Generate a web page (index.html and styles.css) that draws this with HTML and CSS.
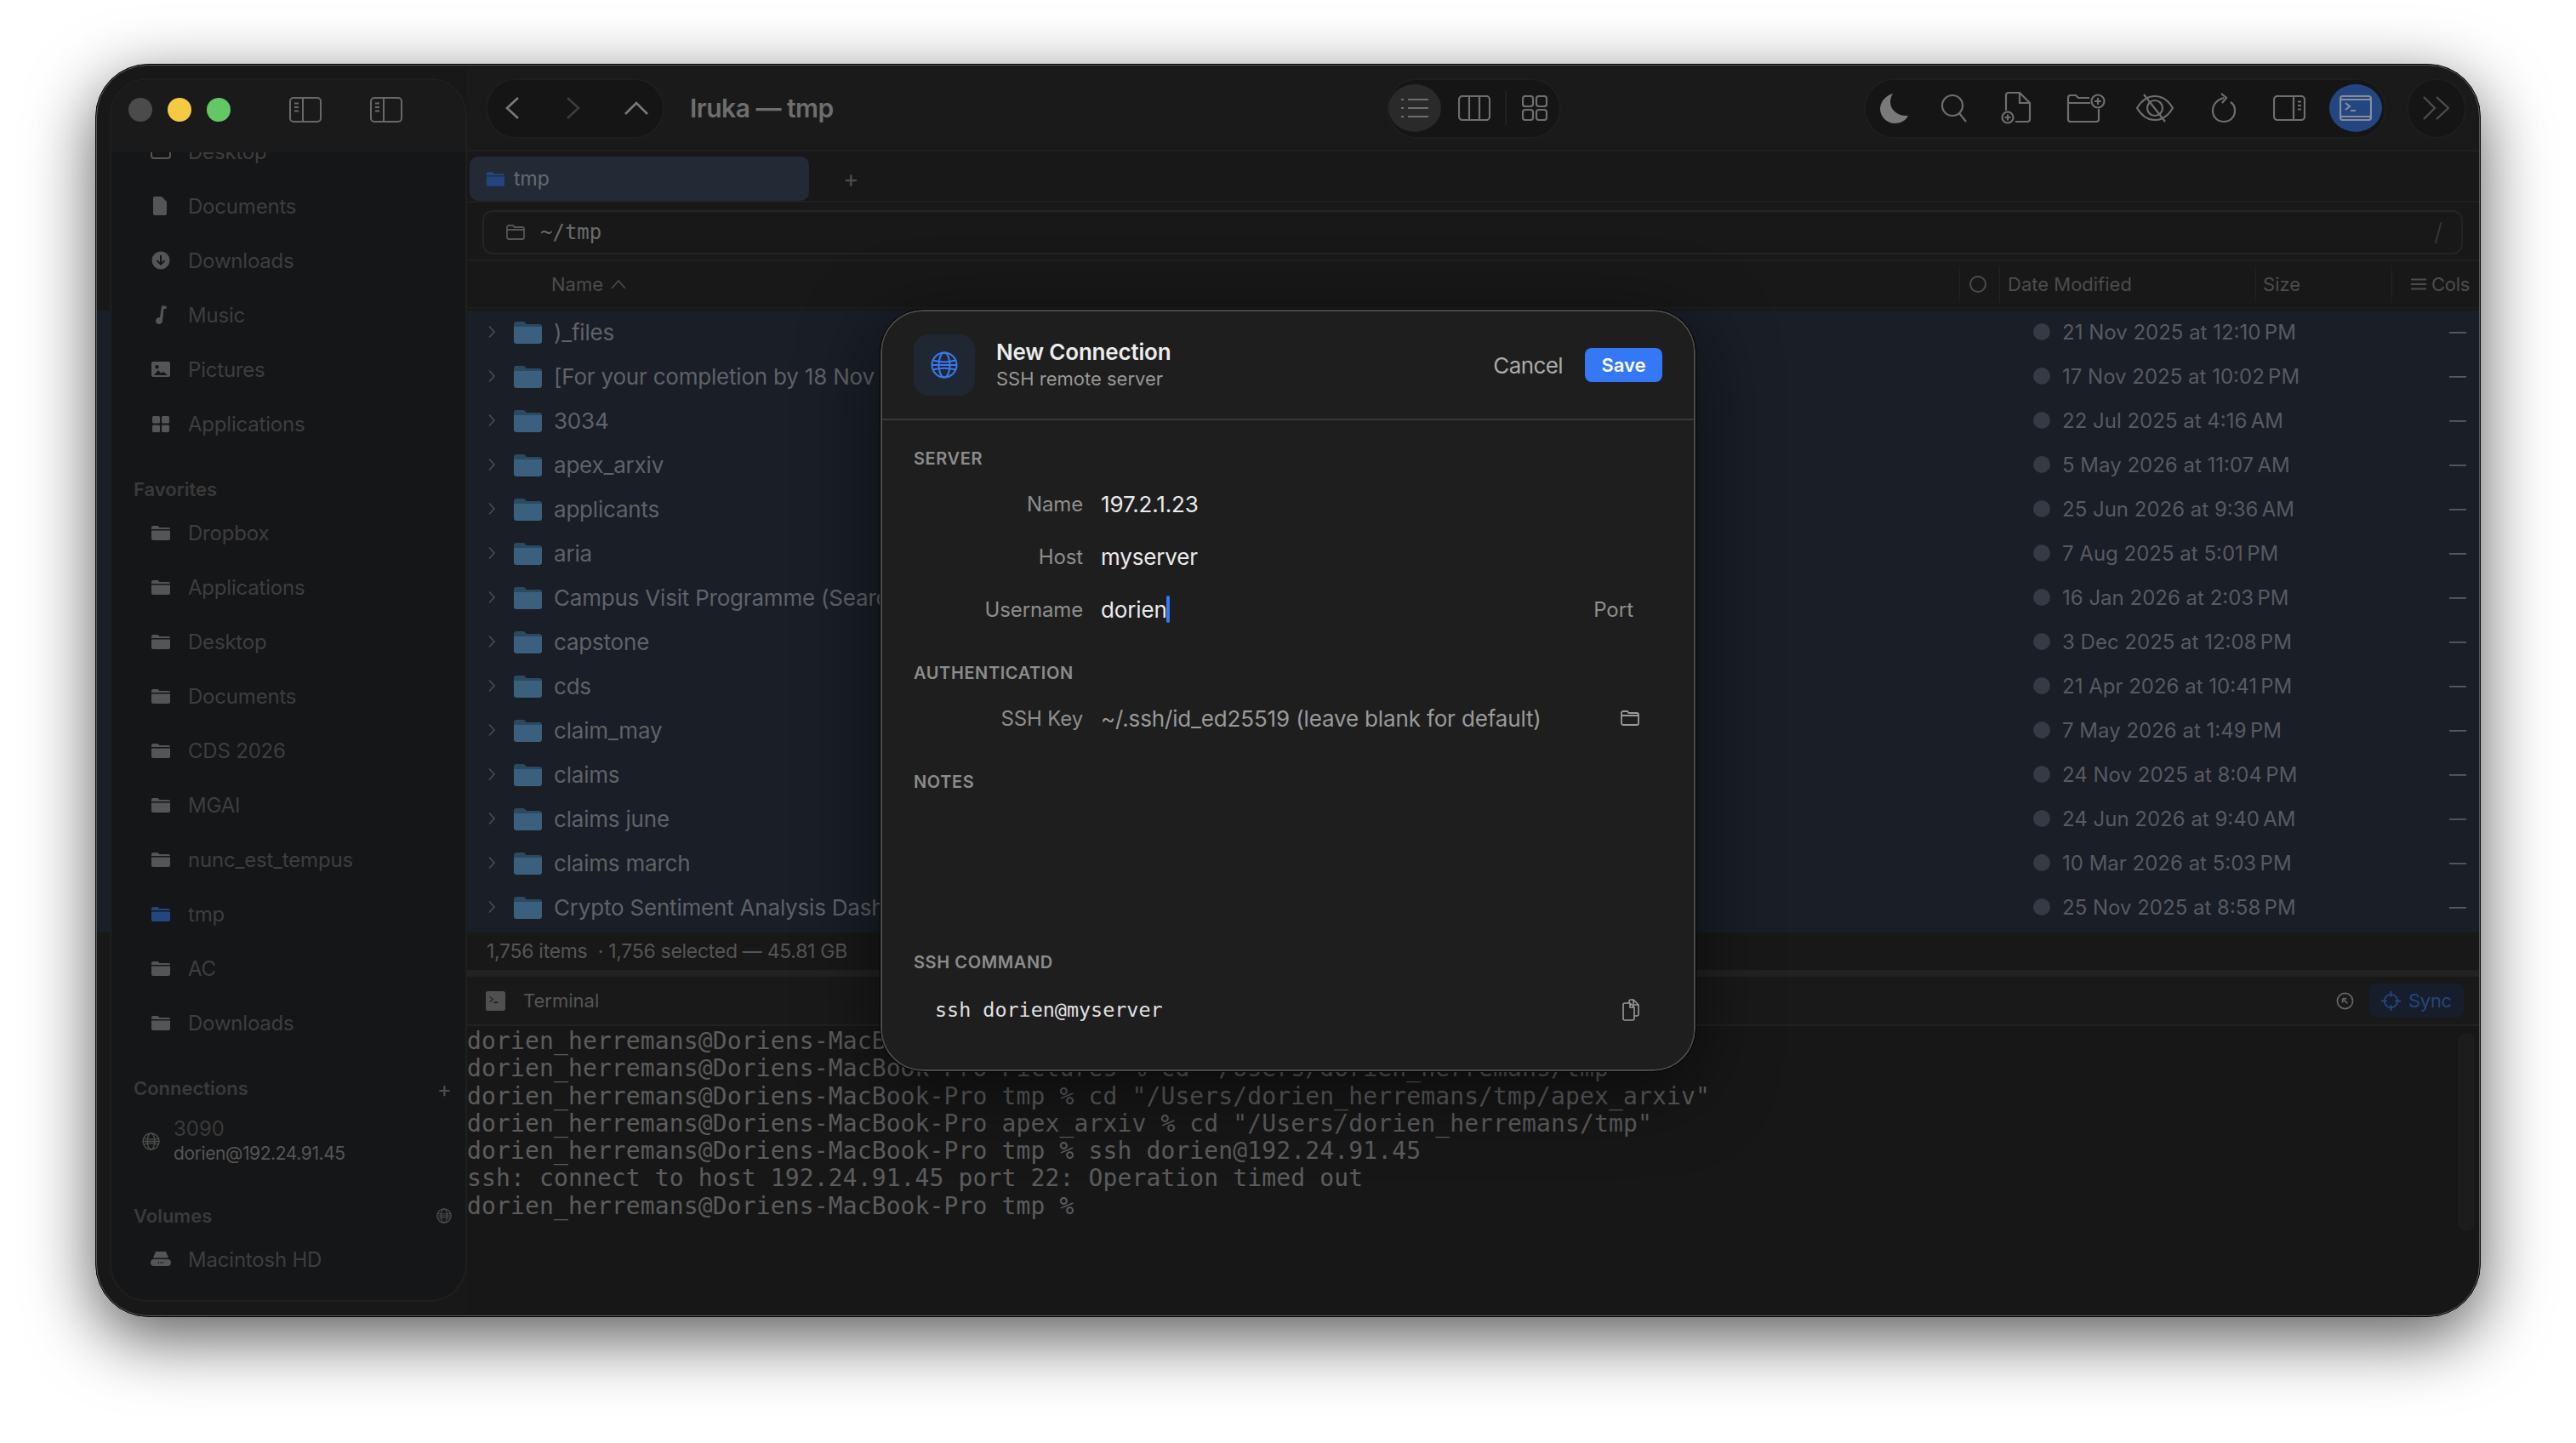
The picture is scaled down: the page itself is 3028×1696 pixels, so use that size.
FILE: index.html
```html
<!DOCTYPE html>
<html lang="en">
<head>
  <meta charset="UTF-8"/>
  <title>Iruka — tmp</title>
  <link rel="stylesheet" href="styles.css">
</head>
<body>

  <!-- shared icons -->
  <svg class="icon-defs" aria-hidden="true">
    <symbol id="i-folder-fill" viewBox="0 0 24 18">
      <path d="M1 3a2 2 0 0 1 2-2h5.5l2 2H21a2 2 0 0 1 2 2H1z"/>
      <path d="M1 6.5h22V16a2 2 0 0 1-2 2H3a2 2 0 0 1-2-2z"/>
    </symbol>
    <symbol id="i-folder-row" viewBox="0 0 33 27">
      <path fill="#2b4a60" d="M0 4a3 3 0 0 1 3-3h9l3 3h15a3 3 0 0 1 3 3v4H0z"/>
      <path fill="#3a607d" d="M0 7h33v17a3 3 0 0 1-3 3H3a3 3 0 0 1-3-3z"/>
    </symbol>
    <symbol id="i-folder-line" viewBox="0 0 22 18">
      <path fill="none" stroke="currentColor" stroke-width="1.8" d="M1 3a2 2 0 0 1 2-2h5l1.5 2H19a2 2 0 0 1 2 2v10a2 2 0 0 1-2 2H3a2 2 0 0 1-2-2zM1 6h20"/>
    </symbol>
    <symbol id="i-chevron" viewBox="0 0 10 16">
      <path fill="none" stroke="currentColor" stroke-width="1.5" d="M2 1.5 8 8l-6 6.5"/>
    </symbol>
    <symbol id="i-globe" viewBox="0 0 32 32">
      <g fill="none" stroke="currentColor" stroke-width="2">
        <circle cx="16" cy="16" r="14.5"/>
        <ellipse cx="16" cy="16" rx="6.5" ry="14.5"/>
        <path d="M3 10.500c7 2.500 19 2.500 26 0M3 21.500c7-2.500 19-2.500 26 0M1.500 16h29"/>
      </g>
    </symbol>
    <symbol id="i-pane" viewBox="0 0 38 30">
      <rect x="1" y="1" width="36" height="28" rx="4" fill="none" stroke="currentColor" stroke-width="2"/>
      <path d="M16 1v28" stroke="currentColor" stroke-width="2"/>
      <path d="M6 7.500h5M6 12h5M6 16.500h5" stroke="currentColor" stroke-width="2"/>
    </symbol>
  </svg>

  <div class="window">
    <div class="selection-band"></div>

    <!-- SIDEBAR -->
    <aside class="sidebar">
      <div class="sidebar-top">
        <span class="light light-grey"></span>
        <span class="light light-yellow"></span>
        <span class="light light-green"></span>
        <svg class="pane-icon pane-first"><use href="#i-pane"/></svg>
        <svg class="pane-icon pane-second"><use href="#i-pane"/></svg>
      </div>
      <div class="sidebar-scroll">
        <div class="side-item">
          <svg class="side-icon" viewBox="0 0 24 18"><rect x="1" y="1" width="22" height="16" rx="3" fill="none" stroke="currentColor" stroke-width="2"/></svg>
          Desktop
        </div>
        <div class="side-item">
          <svg class="side-icon" viewBox="0 0 24 24"><path d="M5 1h8l6 6v14a2 2 0 0 1-2 2H5a2 2 0 0 1-2-2V3a2 2 0 0 1 2-2z"/></svg>
          Documents
        </div>
        <div class="side-item">
          <svg class="side-icon" viewBox="0 0 24 24"><path fill-rule="evenodd" d="M12 1.500a10.500 10.500 0 1 1 0 21 10.500 10.500 0 0 1 0-21zM11 6v8.500l-3-3-1.300 1.300 5.300 5.300 5.300-5.300-1.300-1.300-3 3V6z"/></svg>
          Downloads
        </div>
        <div class="side-item">
          <svg class="side-icon" viewBox="0 0 24 24"><path d="M13 1.500h5.500v3.500H15.500L14 19a4 4 0 1 1-3-3.800z"/></svg>
          Music
        </div>
        <div class="side-item">
          <svg class="side-icon" viewBox="0 0 24 20"><path fill-rule="evenodd" d="M3 1h18a2 2 0 0 1 2 2v14a2 2 0 0 1-2 2H3a2 2 0 0 1-2-2V3a2 2 0 0 1 2-2zm12 12 5 4H4l5-6 3 3.500zM7.500 5a2.200 2.200 0 1 0 0 4.400 2.200 2.200 0 0 0 0-4.400z"/></svg>
          Pictures
        </div>
        <div class="side-item">
          <svg class="side-icon" viewBox="0 0 24 24"><rect x="2" y="3" width="9" height="8.500" rx="1.500"/><rect x="13" y="3" width="9" height="8.500" rx="1.500"/><rect x="2" y="13.500" width="9" height="8.500" rx="1.500"/><rect x="13" y="13.500" width="9" height="8.500" rx="1.500"/></svg>
          Applications
        </div>

        <div class="side-heading">Favorites</div>
        <div class="side-item"><svg class="side-icon"><use href="#i-folder-fill"/></svg>Dropbox</div>
        <div class="side-item"><svg class="side-icon"><use href="#i-folder-fill"/></svg>Applications</div>
        <div class="side-item"><svg class="side-icon"><use href="#i-folder-fill"/></svg>Desktop</div>
        <div class="side-item"><svg class="side-icon"><use href="#i-folder-fill"/></svg>Documents</div>
        <div class="side-item"><svg class="side-icon"><use href="#i-folder-fill"/></svg>CDS 2026</div>
        <div class="side-item"><svg class="side-icon"><use href="#i-folder-fill"/></svg>MGAI</div>
        <div class="side-item"><svg class="side-icon"><use href="#i-folder-fill"/></svg>nunc_est_tempus</div>
        <div class="side-item side-item-current"><svg class="side-icon"><use href="#i-folder-fill"/></svg>tmp</div>
        <div class="side-item"><svg class="side-icon"><use href="#i-folder-fill"/></svg>AC</div>
        <div class="side-item"><svg class="side-icon"><use href="#i-folder-fill"/></svg>Downloads</div>

        <div class="side-heading">
          Connections
          <span class="side-plus">+</span>
        </div>
        <div class="side-connection">
          <svg class="connection-globe"><use href="#i-globe"/></svg>
          <div>
            <div class="connection-name">3090</div>
            <div class="connection-host">dorien@192.24.91.45</div>
          </div>
        </div>

        <div class="side-heading">
          Volumes
          <svg class="volumes-globe"><use href="#i-globe"/></svg>
        </div>
        <div class="side-item">
          <svg class="side-icon" viewBox="0 0 24 18"><path d="M6 0h12l3 7.500H3z"/><path fill-rule="evenodd" d="M4 9h16a3.500 3.500 0 0 1 0 8H4a3.500 3.500 0 0 1 0-8zm5 3v2h1v-2zm2.500 0v2h1v-2zm2.500 0v2h1v-2z"/></svg>
          Macintosh HD
        </div>
      </div>
    </aside>

    <!-- MAIN -->
    <main class="main">
      <header class="toolbar">
        <div class="pill nav-pill">
          <svg class="nav-icon" viewBox="0 0 18 28"><path d="M16 2 3 14l13 12"/></svg>
          <svg class="nav-icon nav-icon-off" viewBox="0 0 18 28"><path d="M2 2l13 12L2 26"/></svg>
          <svg class="nav-up" viewBox="0 0 30 18"><path d="M2 16 15 3l13 13"/></svg>
        </div>
        <div class="window-title">Iruka — tmp</div>

        <div class="pill view-pill">
          <span class="view-btn view-btn-on">
            <svg class="tool-icon" width="34" height="26" viewBox="0 0 34 26"><path d="M9 3h24M9 13h24M9 23h24M1 3h3M1 13h3M1 23h3"/></svg>
          </span>
          <span class="view-btn">
            <svg class="tool-icon" width="38" height="30" viewBox="0 0 38 30"><rect x="1" y="1" width="36" height="28" rx="4"/><path d="M13 1v28M25 1v28"/></svg>
          </span>
          <span class="view-sep"></span>
          <span class="view-btn view-btn-last">
            <svg class="tool-icon" width="30" height="30" viewBox="0 0 30 30"><rect x="1" y="1" width="12" height="12" rx="3"/><rect x="17" y="1" width="12" height="12" rx="3"/><rect x="1" y="17" width="12" height="12" rx="3"/><rect x="17" y="17" width="12" height="12" rx="3"/></svg>
          </span>
        </div>

        <div class="pill tool-pill">
          <span class="tool-slot">
            <svg width="34" height="35" viewBox="0 0 34 35"><path class="moon" d="M15 0C5 3 0 11 0 18c0 9 8 17 17 17 7 0 13-3 16-9-11 1-21-6-21-16 0-4 1-7 3-10z"/></svg>
          </span>
          <span class="tool-slot">
            <svg class="tool-icon" width="32" height="34" viewBox="0 0 32 34"><circle cx="14" cy="14" r="12"/><path d="M22 23l8 10"/></svg>
          </span>
          <span class="tool-slot">
            <svg class="tool-icon" width="36" height="38" viewBox="0 0 36 38"><path d="M6 22V4a3 3 0 0 1 3-3h13l12 12v19a3 3 0 0 1-3 3H17M22 1v12h12"/><circle cx="8" cy="30" r="6.5"/><path d="M8 26.500v7M4.500 30h7"/></svg>
          </span>
          <span class="tool-slot">
            <svg class="tool-icon" width="46" height="34" viewBox="0 0 46 34"><path d="M27 5H14l-3-3H5a3 3 0 0 0-3 3v25a3 3 0 0 0 3 3h30a3 3 0 0 0 3-3V18M2 11h26"/><circle cx="37" cy="9" r="7.5"/><path d="M37 5v8M33 9h8"/></svg>
          </span>
          <span class="tool-slot">
            <svg class="tool-icon" width="46" height="36" viewBox="0 0 46 36"><path d="M2 18C8 8 15 4 23 4s15 4 21 14c-6 10-13 14-21 14S8 28 2 18z"/><circle cx="23" cy="18" r="9"/><path d="M10 2l25 32"/></svg>
          </span>
          <span class="tool-slot">
            <svg class="tool-icon" width="32" height="36" viewBox="0 0 32 36"><path d="M16 6C8 8 3 14 3 21c0 8 6 13 13 13s13-5 13-13c0-4-2-8-5-10M13 1l6 5-5 6"/></svg>
          </span>
          <span class="tool-slot">
            <svg class="tool-icon" width="38" height="30" viewBox="0 0 38 30"><rect x="1" y="1" width="36" height="28" rx="4"/><path d="M24 1v28M29 7.500h4M29 12h4M29 16.500h4"/></svg>
          </span>
          <span class="tool-term">
            <svg class="tool-icon" width="38" height="30" viewBox="0 0 38 30"><rect x="1" y="1" width="36" height="28" rx="3"/><path d="M1 5h36M1 25h36M7 9l5 4-5 4M13 18h6"/></svg>
          </span>
        </div>

        <div class="pill more-pill">
          <svg class="tool-icon" width="34" height="30" viewBox="0 0 34 30"><path d="M2 2l13 13L2 28M17 2l14 13-14 13"/></svg>
        </div>
      </header>

      <div class="tabbar">
        <div class="tab">
          <svg class="tab-folder"><use href="#i-folder-fill"/></svg>
          tmp
        </div>
        <span class="tab-add">+</span>
      </div>

      <div class="pathbar">
        <div class="path-box">
          <svg class="path-folder"><use href="#i-folder-line"/></svg>
          <span class="path-text">~/tmp</span>
          <span class="path-end">/</span>
        </div>
      </div>

      <div class="list-head">
        <span class="head-name">Name</span>
        <svg class="head-sort" viewBox="0 0 18 12"><path d="M1 11 9 2l8 9"/></svg>
        <span class="head-sep head-sep-a"></span>
        <span class="head-circle"></span>
        <span class="head-sep head-sep-b"></span>
        <span class="head-date">Date Modified</span>
        <span class="head-sep head-sep-c"></span>
        <span class="head-size">Size</span>
        <span class="head-sep head-sep-d"></span>
        <svg class="head-sliders" viewBox="0 0 18 16"><path d="M0 2.500h18M0 8h18M0 13.500h18"/></svg>
        <span class="head-cols">Cols</span>
      </div>

      <div class="file-list">
        <div class="row"><svg class="row-chevron"><use href="#i-chevron"/></svg><svg class="row-folder"><use href="#i-folder-row"/></svg><span class="row-name">)_files</span><span class="row-dot"></span><span class="row-date">21 Nov 2025 at 12:10&#8239;PM</span><span class="row-size">—</span></div>
        <div class="row"><svg class="row-chevron"><use href="#i-chevron"/></svg><svg class="row-folder"><use href="#i-folder-row"/></svg><span class="row-name">[For your completion by 18 Nov 2025]</span><span class="row-dot"></span><span class="row-date">17 Nov 2025 at 10:02&#8239;PM</span><span class="row-size">—</span></div>
        <div class="row"><svg class="row-chevron"><use href="#i-chevron"/></svg><svg class="row-folder"><use href="#i-folder-row"/></svg><span class="row-name">3034</span><span class="row-dot"></span><span class="row-date">22 Jul 2025 at 4:16&#8239;AM</span><span class="row-size">—</span></div>
        <div class="row"><svg class="row-chevron"><use href="#i-chevron"/></svg><svg class="row-folder"><use href="#i-folder-row"/></svg><span class="row-name">apex_arxiv</span><span class="row-dot"></span><span class="row-date">5 May 2026 at 11:07&#8239;AM</span><span class="row-size">—</span></div>
        <div class="row"><svg class="row-chevron"><use href="#i-chevron"/></svg><svg class="row-folder"><use href="#i-folder-row"/></svg><span class="row-name">applicants</span><span class="row-dot"></span><span class="row-date">25 Jun 2026 at 9:36&#8239;AM</span><span class="row-size">—</span></div>
        <div class="row"><svg class="row-chevron"><use href="#i-chevron"/></svg><svg class="row-folder"><use href="#i-folder-row"/></svg><span class="row-name">aria</span><span class="row-dot"></span><span class="row-date">7 Aug 2025 at 5:01&#8239;PM</span><span class="row-size">—</span></div>
        <div class="row"><svg class="row-chevron"><use href="#i-chevron"/></svg><svg class="row-folder"><use href="#i-folder-row"/></svg><span class="row-name">Campus Visit Programme (Search)</span><span class="row-dot"></span><span class="row-date">16 Jan 2026 at 2:03&#8239;PM</span><span class="row-size">—</span></div>
        <div class="row"><svg class="row-chevron"><use href="#i-chevron"/></svg><svg class="row-folder"><use href="#i-folder-row"/></svg><span class="row-name">capstone</span><span class="row-dot"></span><span class="row-date">3 Dec 2025 at 12:08&#8239;PM</span><span class="row-size">—</span></div>
        <div class="row"><svg class="row-chevron"><use href="#i-chevron"/></svg><svg class="row-folder"><use href="#i-folder-row"/></svg><span class="row-name">cds</span><span class="row-dot"></span><span class="row-date">21 Apr 2026 at 10:41&#8239;PM</span><span class="row-size">—</span></div>
        <div class="row"><svg class="row-chevron"><use href="#i-chevron"/></svg><svg class="row-folder"><use href="#i-folder-row"/></svg><span class="row-name">claim_may</span><span class="row-dot"></span><span class="row-date">7 May 2026 at 1:49&#8239;PM</span><span class="row-size">—</span></div>
        <div class="row"><svg class="row-chevron"><use href="#i-chevron"/></svg><svg class="row-folder"><use href="#i-folder-row"/></svg><span class="row-name">claims</span><span class="row-dot"></span><span class="row-date">24 Nov 2025 at 8:04&#8239;PM</span><span class="row-size">—</span></div>
        <div class="row"><svg class="row-chevron"><use href="#i-chevron"/></svg><svg class="row-folder"><use href="#i-folder-row"/></svg><span class="row-name">claims june</span><span class="row-dot"></span><span class="row-date">24 Jun 2026 at 9:40&#8239;AM</span><span class="row-size">—</span></div>
        <div class="row"><svg class="row-chevron"><use href="#i-chevron"/></svg><svg class="row-folder"><use href="#i-folder-row"/></svg><span class="row-name">claims march</span><span class="row-dot"></span><span class="row-date">10 Mar 2026 at 5:03&#8239;PM</span><span class="row-size">—</span></div>
        <div class="row"><svg class="row-chevron"><use href="#i-chevron"/></svg><svg class="row-folder"><use href="#i-folder-row"/></svg><span class="row-name">Crypto Sentiment Analysis Dashboard</span><span class="row-dot"></span><span class="row-date">25 Nov 2025 at 8:58&#8239;PM</span><span class="row-size">—</span></div>
      </div>

      <div class="statusbar">1,756 items &nbsp;· 1,756 selected — 45.81 GB</div>
      <div class="split-handle"></div>

      <div class="term-head">
        <svg class="term-badge" viewBox="0 0 24 24"><path fill-rule="evenodd" d="M3 0h18a3 3 0 0 1 3 3v18a3 3 0 0 1-3 3H3a3 3 0 0 1-3-3V3a3 3 0 0 1 3-3zm2 6v1.500L8 10l-3 2.500V14l4.500-4zm5 7v1.500h5V13z"/></svg>
        <span class="term-title">Terminal</span>
        <svg class="term-recent" viewBox="0 0 22 22"><circle cx="11" cy="11" r="9.5"/><path d="M8 8l6 6M8 8v5M8 8h5"/></svg>
        <span class="sync-btn">
          <svg class="sync-icon" viewBox="0 0 24 24"><circle cx="12" cy="12" r="8"/><path d="M12 0v7M12 17v7M0 12h7M17 12h7"/></svg>
          Sync
        </span>
      </div>

      <div class="terminal">
        <pre class="term-output">dorien_herremans@Doriens-MacBook-Pro ~ % cd Pictures
dorien_herremans@Doriens-MacBook-Pro Pictures % cd "/Users/dorien_herremans/tmp"
dorien_herremans@Doriens-MacBook-Pro tmp % cd "/Users/dorien_herremans/tmp/apex_arxiv"
dorien_herremans@Doriens-MacBook-Pro apex_arxiv % cd "/Users/dorien_herremans/tmp"
dorien_herremans@Doriens-MacBook-Pro tmp % ssh dorien@192.24.91.45
ssh: connect to host 192.24.91.45 port 22: Operation timed out
dorien_herremans@Doriens-MacBook-Pro tmp % </pre>
        <div class="term-scroll"></div>
      </div>
    </main>

    <!-- NEW CONNECTION DIALOG -->
    <div class="backdrop">
      <div class="dialog">
        <div class="dialog-head">
          <div class="dialog-tile"><svg class="dialog-globe"><use href="#i-globe"/></svg></div>
          <div class="dialog-titles">
            <div class="dialog-title">New Connection</div>
            <div class="dialog-sub">SSH remote server</div>
          </div>
          <span class="btn-cancel">Cancel</span>
          <span class="btn-save">Save</span>
        </div>

        <div class="dialog-body">
          <div class="section-label">SERVER</div>
          <div class="form-row">
            <span class="form-label">Name</span>
            <span class="form-value">197.2.1.23</span>
          </div>
          <div class="form-row">
            <span class="form-label">Host</span>
            <span class="form-value">myserver</span>
          </div>
          <div class="form-row">
            <span class="form-label">Username</span>
            <span class="form-value">dorien<span class="caret"></span></span>
            <span class="form-port">Port</span>
          </div>

          <div class="section-label section-auth">AUTHENTICATION</div>
          <div class="form-row">
            <span class="form-label">SSH Key</span>
            <span class="form-value form-placeholder">~/.ssh/id_ed25519 (leave blank for default)</span>
            <svg class="form-folder"><use href="#i-folder-line"/></svg>
          </div>

          <div class="section-label section-notes">NOTES</div>
          <div class="notes-area"></div>

          <div class="section-label">SSH COMMAND</div>
          <div class="command-row">
            <span class="command-text">ssh dorien@myserver</span>
            <svg class="copy-icon" viewBox="0 0 20 26"><path d="M8 5V3a2 2 0 0 1 2-2h3l6 6v11a2 2 0 0 1-2 2h-3M13 1v6h6"/><path d="M3 5h6l5 5v13a2 2 0 0 1-2 2H3a2 2 0 0 1-2-2V7a2 2 0 0 1 2-2zM9 5v5h5"/></svg>
          </div>
        </div>
      </div>
    </div>
  </div>

</body>
</html>
```

FILE: styles.css
```css
/**********************************************
 *  Page + window frame
 **********************************************/
* {
  box-sizing: border-box;
}

body {
  margin: 0;
  height: 1696px;
  padding: 75px 112px 0;
  background-color: #fff;
  font-family: Inter, "Liberation Sans", sans-serif;
  overflow: hidden;
}

.icon-defs {
  display: none;
}

.window {
  position: relative;
  display: flex;
  height: 1473px;
  background-color: #181818;
  border: 1px solid #000;
  border-radius: 62px;
  overflow: hidden;
}

body::before {
  content: "";
  position: absolute;
  left: 112px;
  top: 75px;
  width: 2804px;
  height: 1473px;
  border-radius: 62px;
  box-shadow: 0 24px 80px rgba(0, 0, 0, 0.65);
}

.window::after {
  content: "";
  position: absolute;
  inset: 0;
  border: 1.5px solid #5c5c5c;
  border-radius: 61px;
  pointer-events: none;
}

.selection-band {
  position: absolute;
  left: 0;
  right: 0;
  top: 289px;
  height: 731px;
  background-color: #191e27;
}

/**********************************************
 *  Sidebar
 **********************************************/
.sidebar {
  position: relative;
  flex: none;
  display: flex;
  flex-direction: column;
  width: 420px;
  margin: 16px 0 17px 16px;
  background-color: #151617;
  border: 2px solid #1f1f20;
  border-radius: 44px;
  overflow: hidden;
}

.sidebar-top {
  flex: none;
  position: relative;
  z-index: 1;
  display: flex;
  align-items: center;
  gap: 18px;
  height: 85px;
  padding: 0 0 16px 20px;
  background-color: #1a1a1a;
}

.light {
  width: 28px;
  height: 28px;
  border-radius: 50%;
}

.light-grey { background-color: #4b4b4b; }
.light-yellow { background-color: #f6c945; }
.light-green { background-color: #62c765; }

.pane-icon {
  width: 38px;
  height: 30px;
  color: #686868;
}

.pane-first { margin-left: 51px; }
.pane-second { margin-left: 39px; }

.sidebar-scroll {
  flex: 1;
  margin-top: -33px;
  color: #3d3e40;
  font-size: 24px;
}

.side-item {
  display: flex;
  align-items: center;
  height: 64px;
  padding-left: 44px;
  letter-spacing: -0.2px;
}

.side-icon {
  flex: none;
  width: 24px;
  height: 24px;
  margin: 0 20px 0 2px;
  fill: #555556;
  color: #555556;
}

.side-item-current .side-icon {
  fill: #234681;
}

.side-heading {
  display: flex;
  justify-content: space-between;
  align-items: center;
  height: 64px;
  padding: 26px 16px 0 26px;
  font-size: 22px;
  font-weight: 600;
  color: #3a3a3b;
}

.side-plus {
  font-size: 26px;
  font-weight: 400;
  color: #4c4c4c;
}

.volumes-globe {
  width: 18px;
  height: 22px;
  color: #4e4e4e;
}

.side-connection {
  display: flex;
  align-items: center;
  gap: 16px;
  height: 86px;
  padding-left: 36px;
}

.connection-globe {
  width: 21px;
  height: 21px;
  color: #4e4e4e;
}

.connection-name {
  font-size: 24px;
  line-height: 29px;
  color: #3a3a3b;
}

.connection-host {
  font-size: 21px;
  line-height: 29px;
  color: #565656;
  letter-spacing: -0.4px;
}

/**********************************************
 *  Main column
 **********************************************/
.main {
  position: relative;
  flex: 1;
  min-width: 0;
  display: flex;
  flex-direction: column;
}

.toolbar {
  flex: none;
  display: flex;
  align-items: center;
  height: 102px;
  padding: 2px 16px 0 22px;
  background-color: #1a1a1a;
  border-bottom: 2px solid #202020;
}

.pill {
  display: flex;
  align-items: center;
  height: 71px;
  background-color: #151515;
  border: 2px solid #1e1e1e;
  border-radius: 36px;
}

.nav-pill {
  width: 210px;
  padding: 0 16px 0 20px;
  justify-content: space-between;
}

.nav-icon {
  width: 18px;
  height: 28px;
}

.nav-icon-off {
  margin-left: 4px;
}

.nav-up {
  width: 30px;
  height: 18px;
}

.nav-icon path,
.nav-up path {
  fill: none;
  stroke: #7a7a7a;
  stroke-width: 2.6;
}

.nav-icon-off path {
  stroke: #3c3c3c;
}

.window-title {
  margin-left: 30px;
  font-size: 30px;
  font-weight: 600;
  letter-spacing: -0.5px;
  color: #6e6e6e;
}

.tool-icon {
  fill: none;
  stroke: #6e6e6e;
  stroke-width: 2.2;
}

.view-pill {
  margin-left: auto;
  margin-right: 356px;
  width: 205px;
}

.view-btn {
  flex: none;
  display: flex;
  align-items: center;
  justify-content: center;
  width: 62px;
  height: 56px;
  border-radius: 50%;
}

.view-btn-on {
  background-color: #2a2a2a;
  margin-right: 8px;
}

.view-sep {
  flex: none;
  width: 2px;
  height: 40px;
  margin: 0 3px 0 5px;
  background-color: #212121;
}

.view-btn-last {
  width: 60px;
}

.tool-pill {
  display: grid;
  grid-template-columns: 68px 72px 74px 90px 72px 90px 64px 82px;
  width: 614px;
  border-radius: 36px;
}

.tool-slot {
  display: flex;
  justify-content: center;
}

.moon {
  fill: #7a7a7a;
}

.tool-term {
  display: flex;
  align-items: center;
  justify-content: center;
  width: 62px;
  height: 56px;
  margin-left: 15px;
  background-color: #234681;
  border-radius: 50%;
}

.tool-term .tool-icon {
  stroke: #868e9c;
}

.more-pill {
  justify-content: center;
  width: 70px;
  margin-left: 24px;
}

.more-pill .tool-icon {
  stroke: #4f4f4f;
}

/**********************************************
 *  Tabs + path
 **********************************************/
.tabbar {
  flex: none;
  display: flex;
  align-items: flex-start;
  height: 60px;
  padding: 6px 0 0 3px;
  border-bottom: 2px solid #202020;
}

.tab {
  display: flex;
  align-items: center;
  width: 399px;
  height: 52px;
  padding-left: 19px;
  background-color: #232a36;
  border-radius: 10px;
  font-size: 23px;
  color: #646a73;
}

.tab-folder {
  width: 23px;
  height: 22px;
  margin-right: 10px;
  fill: #234681;
}

.tab-add {
  align-self: center;
  margin-left: 40px;
  font-size: 28px;
  color: #4c4c4c;
}

.pathbar {
  flex: none;
  height: 69px;
  padding: 9px 20px 0 18px;
  border-bottom: 2px solid #202020;
}

.path-box {
  display: flex;
  align-items: center;
  height: 52px;
  padding: 0 26px;
  border: 2px solid #242424;
  border-radius: 12px;
}

.path-folder {
  width: 22px;
  height: 18px;
  margin-right: 18px;
  color: #555;
}

.path-text {
  font-family: "DejaVu Sans Mono", monospace;
  font-size: 24px;
  color: #6a6a6a;
}

.path-end {
  margin-left: auto;
  margin-right: -4px;
  font-size: 28px;
  font-weight: 300;
  color: #3a3a3a;
}

/**********************************************
 *  File list
 **********************************************/
.list-head {
  position: relative;
  flex: none;
  display: flex;
  align-items: center;
  height: 56px;
  font-size: 22px;
  color: #4c4c4c;
  border-bottom: 2px solid #1d1d1d;
}

.list-head > * {
  flex: none;
}

.head-name {
  margin-left: 99px;
}

.head-sort {
  width: 18px;
  height: 12px;
  margin-left: 9px;
  fill: none;
  stroke: #4c4c4c;
  stroke-width: 1.6;
}

.head-sep {
  position: absolute;
  top: 6px;
  bottom: 6px;
  width: 1px;
  background-color: #212121;
}

.head-sep-a { left: 1754px; }
.head-sep-b { left: 1801px; }
.head-sep-c { left: 2102px; }
.head-sep-d { left: 2262px; }

.head-circle {
  margin-left: 1579px;
  width: 20px;
  height: 20px;
  border: 2px solid #4c4c4c;
  border-radius: 50%;
}

.head-date {
  width: 300px;
  margin-left: 25px;
}

.head-size {
  width: 174px;
}

.head-sliders {
  width: 18px;
  height: 16px;
  fill: none;
  stroke: #4c4c4c;
  stroke-width: 2;
}

.head-cols {
  margin-left: 6px;
  letter-spacing: -0.3px;
}

.file-list {
  flex: none;
  height: 733px;
  padding-top: 1px;
}

.row {
  display: flex;
  align-items: center;
  height: 52px;
  padding-left: 24px;
  padding-right: 16px;
}

.row-chevron {
  flex: none;
  width: 10px;
  height: 16px;
  margin-right: 21px;
  color: #4c4f55;
}

.row-folder {
  flex: none;
  width: 33px;
  height: 27px;
  margin-right: 14px;
}

.row-name {
  flex: 1;
  min-width: 0;
  font-size: 26px;
  letter-spacing: -0.2px;
  color: #606266;
  white-space: nowrap;
}

.row-dot {
  flex: none;
  width: 20px;
  height: 20px;
  background-color: #353a45;
  border-radius: 50%;
}

.row-date {
  flex: none;
  width: 455px;
  margin-left: 14px;
  font-size: 24px;
  color: #585a60;
}

.row-size {
  flex: none;
  width: 20px;
  font-size: 20px;
  color: #585a60;
}

.statusbar {
  flex: none;
  display: flex;
  align-items: center;
  height: 44px;
  padding-left: 23px;
  font-size: 23px;
  letter-spacing: -0.3px;
  color: #555;
}

.split-handle {
  flex: none;
  height: 8px;
  background-color: #222;
}

/**********************************************
 *  Terminal
 **********************************************/
.term-head {
  flex: none;
  display: flex;
  align-items: center;
  height: 58px;
  padding: 0 19px 0 22px;
  background-color: #191919;
  border-bottom: 2px solid #222;
}

.term-badge {
  width: 23px;
  height: 23px;
  fill: #505050;
}

.term-title {
  margin-left: 21px;
  font-size: 22px;
  color: #555;
}

.term-recent {
  width: 21px;
  height: 21px;
  margin-left: auto;
  fill: none;
  stroke: #666;
  stroke-width: 1.8;
}

.sync-btn {
  display: flex;
  align-items: center;
  gap: 9px;
  width: 111px;
  height: 40px;
  margin-left: 18px;
  padding-left: 14px;
  background-color: #171d2a;
  border-radius: 8px;
  font-size: 22px;
  letter-spacing: -0.3px;
  color: #24457f;
}

.sync-icon {
  width: 23px;
  height: 23px;
  fill: none;
  stroke: #24457f;
  stroke-width: 2;
}

.terminal {
  position: relative;
  flex: 1;
  background-color: #171717;
}

.term-output {
  margin: 0;
  padding: 2px 0 0 0;
  font-family: "DejaVu Sans Mono", monospace;
  font-size: 28px;
  line-height: 32.3px;
  letter-spacing: 0.13px;
  color: #5c5c5e;
}

.term-scroll {
  position: absolute;
  right: 6px;
  top: 8px;
  bottom: 100px;
  width: 20px;
  background-color: #1c1c1c;
  border-radius: 10px;
}

/**********************************************
 *  New Connection dialog
 **********************************************/
.backdrop {
  position: absolute;
  inset: 0;
  display: flex;
  align-items: center;
  justify-content: center;
}

.dialog {
  width: 958px;
  height: 895px;
  background-color: #1e1e1e;
  border: 2px solid #4a4a4a;
  border-radius: 50px;
  outline: 1px solid #000;
  box-shadow: 0 20px 90px rgba(0, 0, 0, 0.55);
}

.dialog-head {
  display: flex;
  align-items: center;
  height: 128px;
  padding: 0 37px;
  border-bottom: 2px solid #383838;
}

.dialog-tile {
  display: flex;
  align-items: center;
  justify-content: center;
  width: 72px;
  height: 72px;
  background-color: #1f2733;
  border-radius: 18px;
}

.dialog-globe {
  width: 32px;
  height: 32px;
  color: #3a78f0;
}

.dialog-titles {
  flex: 1;
  margin-left: 25px;
}

.dialog-title {
  font-size: 26px;
  line-height: 32px;
  font-weight: 600;
  letter-spacing: -0.2px;
  color: #ececec;
}

.dialog-sub {
  font-size: 22px;
  line-height: 30px;
  color: #979797;
}

.btn-cancel {
  font-size: 26px;
  letter-spacing: -0.6px;
  color: #ababab;
}

.btn-save {
  display: flex;
  align-items: center;
  justify-content: center;
  width: 91px;
  height: 40px;
  margin-left: 26px;
  background-color: #3478f6;
  border-radius: 8px;
  font-size: 22px;
  font-weight: 600;
  color: #fff;
}

.dialog-body {
  padding: 33px 37px 0;
}

.section-label {
  height: 24px;
  font-size: 20px;
  line-height: 24px;
  font-weight: 600;
  letter-spacing: 0.6px;
  color: #8c8c8c;
}

.section-auth {
  margin-top: 32px;
}

.section-notes {
  margin-top: 32px;
}

.form-row {
  display: flex;
  align-items: center;
  height: 62px;
}

.section-label + .form-row {
  margin-top: 10px;
}

.form-label {
  flex: none;
  width: 199px;
  text-align: right;
  font-size: 24px;
  letter-spacing: -0.15px;
  color: #8e8e8e;
}

.form-value {
  display: flex;
  align-items: center;
  margin-left: 21px;
  font-size: 26px;
  letter-spacing: -0.15px;
  color: #ebebeb;
}

.form-placeholder {
  color: #9a9a9a;
}

.caret {
  width: 4px;
  height: 32px;
  margin-left: -1px;
  background-color: #3478f6;
  border-radius: 2px;
}

.form-port {
  margin-left: auto;
  margin-right: 34px;
  font-size: 24px;
  color: #8e8e8e;
}

.form-folder {
  margin-left: auto;
  margin-right: 27px;
  width: 22px;
  height: 18px;
  color: #9a9a9a;
}

.notes-area {
  height: 188px;
}

.command-row {
  display: flex;
  align-items: center;
  justify-content: space-between;
  height: 62px;
  margin-top: 13px;
  padding: 0 27px 0 25px;
}

.command-text {
  font-family: "DejaVu Sans Mono", monospace;
  font-size: 23.4px;
  color: #e0e0e0;
}

.copy-icon {
  width: 20px;
  height: 26px;
  fill: none;
  stroke: #999;
  stroke-width: 1.6;
}
```
